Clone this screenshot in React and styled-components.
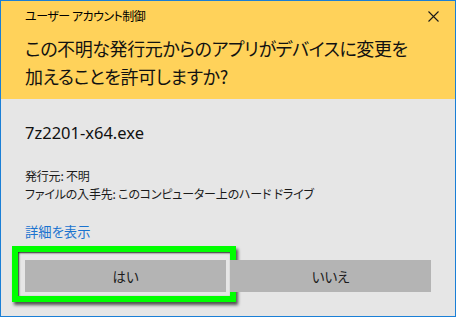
import React from "react";
import styled, { createGlobalStyle } from "styled-components";

const GlobalStyle = createGlobalStyle`
  html, body { margin: 0; padding: 0; background: #e6e6e6; }
  * { box-sizing: border-box; }
`;

const jp = `"Noto Sans CJK JP", "Noto Sans", sans-serif`;

const Dialog = styled.div`
  width: 456px;
  height: 317px;
  border: 1px solid #1a7fd6;
  background: #e6e6e6;
  display: flex;
  flex-direction: column;
  font-family: ${jp};
  font-feature-settings: "palt";
  color: #000;
`;

const Header = styled.div`
  background: #ffd25a;
  height: 98px;
  padding: 6px 16px 0 24px;
  display: flex;
  flex-direction: column;
`;

const TitleBar = styled.div`
  display: flex;
  justify-content: space-between;
  align-items: center;
  height: 18px;
`;

const Title = styled.span`
  font-size: 12px;
  letter-spacing: -0.5px;
  line-height: 18px;
  color: #000;
`;

const CloseButton = styled.button`
  border: 0;
  background: transparent;
  padding: 0;
  width: 12px;
  height: 12px;
  display: flex;
  align-items: center;
  justify-content: center;
`;

const Heading = styled.h1`
  margin: 9px 0 0;
  font-size: 18px;
  letter-spacing: -0.4px;
  font-weight: 400;
  line-height: 28px;
  white-space: nowrap;
  color: #111;
`;

const Body = styled.div`
  padding: 0 24px;
  display: flex;
  flex-direction: column;
`;

const FileName = styled.div`
  margin-top: 23px;
  height: 22px;
  font-family: "Noto Sans", sans-serif;
  font-size: 16.5px;
  line-height: 22px;
  color: #111;
`;

const InfoList = styled.div`
  margin-top: 23px;
  display: flex;
  flex-direction: column;
  font-size: 12px;
  letter-spacing: -0.2px;
  color: #1a1a1a;
`;

const InfoLine = styled.div`
  height: 18px;
  line-height: 18px;
  white-space: nowrap;
`;

const DetailsLink = styled.a`
  margin-top: 20px;
  height: 18px;
  font-size: 13.3px;
  line-height: 18px;
  color: #1a73cf;
  text-decoration: none;
  align-self: flex-start;
`;

const ButtonRow = styled.div`
  margin-top: 19px;
  padding: 0 24px;
  display: flex;
  gap: 4px;
`;

const Button = styled.button`
  position: relative;
  width: 201px;
  height: 32px;
  border: 0;
  background: #b4b4b4;
  font-family: ${jp};
  font-feature-settings: "palt";
  font-size: 13.5px;
  color: #1a1a1a;
  padding: 0;
`;

const Highlight = styled.span`
  position: absolute;
  top: -14px;
  left: -13px;
  right: -10px;
  bottom: -10px;
  border: 6px solid #00ff00;
  box-shadow: 2px 3px 3px rgba(0, 0, 0, 0.65),
    inset 1px 1px 2px rgba(0, 0, 0, 0.85);
  pointer-events: none;
`;

export default function App() {
  return (
    <>
      <GlobalStyle />
      <Dialog>
        <Header>
          <TitleBar>
            <Title>ユーザー アカウント制御</Title>
            <CloseButton aria-label="閉じる">
              <svg width="11" height="11" viewBox="0 0 11 11">
                <path d="M0.5 0.5L10.5 10.5M10.5 0.5L0.5 10.5" stroke="#1a1a1a" strokeWidth="1.1" />
              </svg>
            </CloseButton>
          </TitleBar>
          <Heading>
            この不明な発行元からのアプリがデバイスに変更を
            <br />
            加えることを許可しますか?
          </Heading>
        </Header>
        <Body>
          <FileName>7z2201-x64.exe</FileName>
          <InfoList>
            <InfoLine>発行元: 不明</InfoLine>
            <InfoLine>ファイルの入手先: このコンピューター上のハード ドライブ</InfoLine>
          </InfoList>
          <DetailsLink href="#">詳細を表示</DetailsLink>
        </Body>
        <ButtonRow>
          <Button>
            はい
            <Highlight />
          </Button>
          <Button>いいえ</Button>
        </ButtonRow>
      </Dialog>
    </>
  );
}
